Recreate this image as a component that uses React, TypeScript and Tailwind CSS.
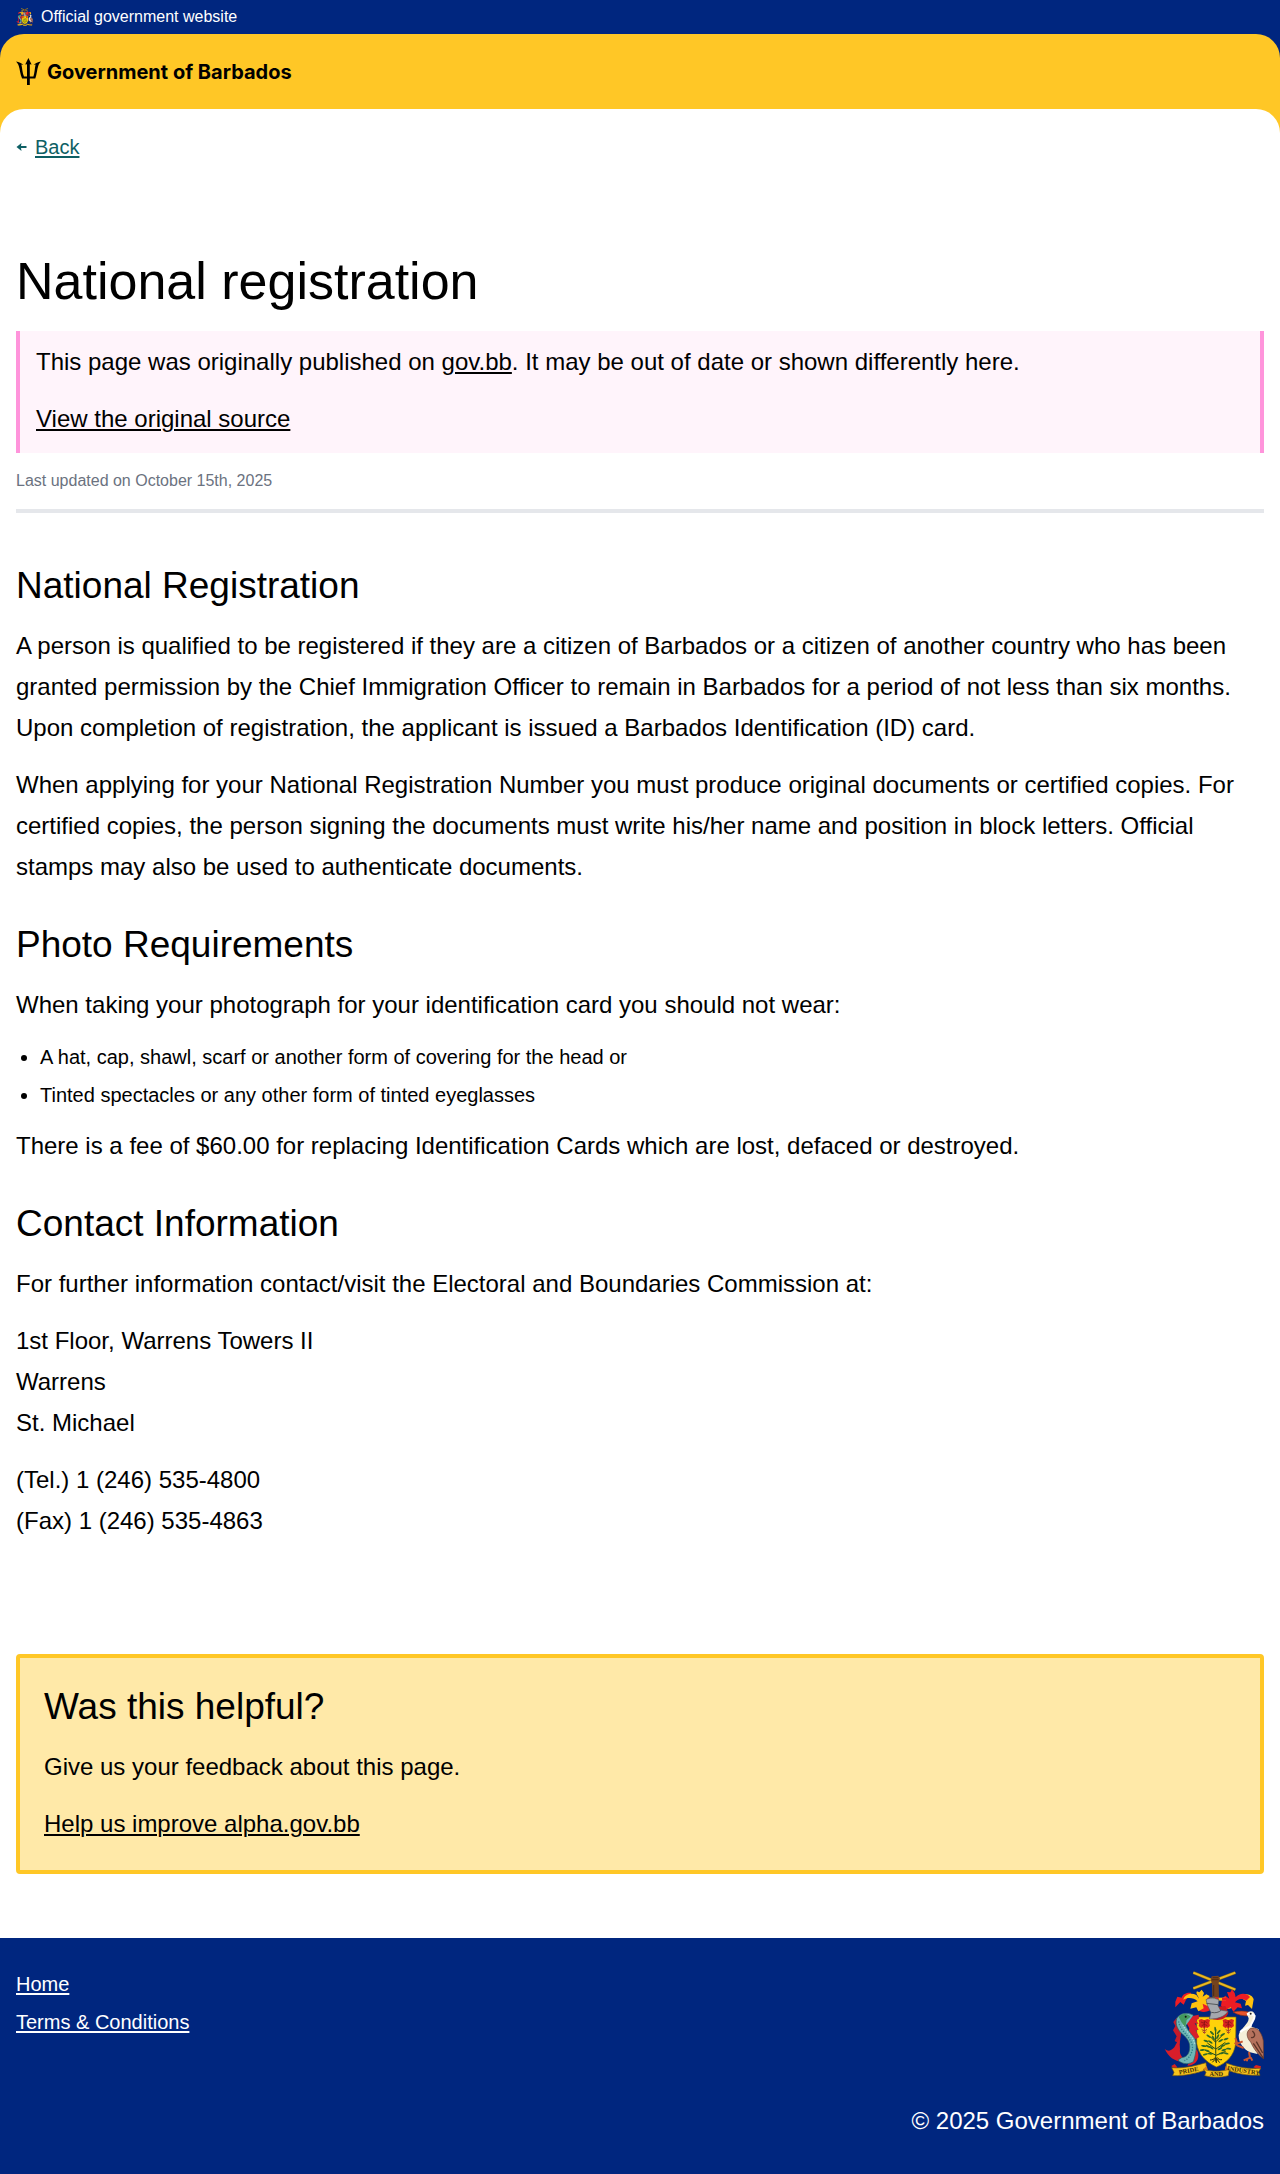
import type { ReactNode } from 'react';

const LINK = 'underline decoration-2 underline-offset-2';

function Trident() {
  return (
    <svg viewBox="0 0 25 27" className="h-[27px] w-[25px] shrink-0" fill="currentColor" aria-hidden="true">
      <path d="M12.4 0 15.6 6.6 13.8 6.2V18.4H17.4C18.6 15 18.7 10.4 19.6 6.4L17.6 6.8C19.4 5 22 4 25 3.4 23.7 4.6 22.9 6 22.3 7.8 21 11.6 20.9 16.6 19.3 20.4H13.8V27H11V20.4H6.1C4.1 16.6 4 11.6 2.7 7.8 2.1 6 1.3 4.6 0 3.4 3 4 5.6 5 7.4 6.8L5.4 6.4C6.3 10.4 6.4 15 8 18.4H11V6.2L9.2 6.6Z" />
    </svg>
  );
}

function Leaf({ x, y, r }: { x: number; y: number; r: number }) {
  return <ellipse cx={x} cy={y} rx="8" ry="2.8" fill="#2f6a26" transform={`rotate(${r} ${x} ${y})`} />;
}

const LEAVES: [number, number, number][] = [
  [196, 208, 80], [206, 216, -50], [186, 219, 45], [218, 224, -30], [176, 229, 35],
  [203, 230, -60], [190, 234, 60], [228, 237, -20], [168, 243, 20], [212, 242, -30],
  [181, 246, 35], [232, 251, -10], [161, 258, 10], [219, 257, -25], [174, 259, 25],
  [236, 266, 5], [157, 270, -5], [222, 270, -15], [171, 272, 12], [228, 280, 15],
  [166, 283, -15], [210, 266, -30], [184, 263, 35], [214, 280, -5], [180, 281, 5],
];

function Flower({ x }: { x: number }) {
  return (
    <g>
      <path d={`M${x - 17} 180l8-3 9 4 9-4 8 3-2 9 2 9-8 6-5-2-4 5-4-5-5 2-8-6 2-9z`} fill="#d8241f" />
      <path d={`M${x - 10} 186l7 3 7-4 6 5M${x - 8} 197l8-4 9 4M${x} 181v22`} stroke="#7d0f12" strokeWidth="2" fill="none" />
      <path d={`M${x - 8} 208c4 5 12 5 16 0M${x} 204v15M${x - 5} 215l5 5 5-5`} stroke="#a6402c" strokeWidth="3" fill="none" />
    </g>
  );
}

function CoatOfArms({ className, motto = false }: { className: string; motto?: boolean }) {
  return (
    <svg viewBox="42 30 300 324" className={className} role="img" aria-label="Coat of arms of Barbados">
      {/* crossed sugar canes and raised arm */}
      <path d="M130 38 256 89" stroke="#8a6d10" strokeWidth="9" />
      <path d="M130 38 256 89" stroke="#e9b824" strokeWidth="6" />
      <path d="M130 85 256 38" stroke="#8a6d10" strokeWidth="9" />
      <path d="M130 85 256 38" stroke="#e9b824" strokeWidth="6" />
      <path d="M187 112 186 70 182 60 185 49 205 47 210 56 206 69 207 112Z" fill="#74431f" />
      <path d="M188 53h17M186 59h20M191 75v33" stroke="#3d210f" strokeWidth="2" />

      {/* mantling */}
      <path d="M180 150C164 160 150 156 142 147 147 143 142 137 137 132L150 118 178 124Z" fill="#ed1c24" />
      <path d="M218 148c14 0 26-2 34-8 6-6 2-13-4-17l-22-10-10 20z" fill="#f4c410" />
      <path d="M76 142 76 125 82 110 95 113C99 101 113 97 124 99L108 119 101 134 91 126Z" fill="#ed1c24" />
      <path d="M100 119C103 104 122 96 139 105 142 108 144 112 147 116 144 106 136 101 141 94L148 97 155 89 162 99 158 110 169 103 179 108 170 120 180 126 174 139 158 131 161 145 145 154 139 142 121 146 125 130 143 124C131 113 114 111 100 119Z" fill="#ffc20e" />
      <path d="M311 118 306 147 294 135 285 137 288 123 270 112 283 102C299 103 307 107 311 118Z" fill="#ffc20e" />
      <path d="M216 116 226 107 238 116 231 96 241 97 246 88 254 99 257 112C267 99 289 97 300 111L289 122C275 113 263 116 255 127L272 131 276 145 263 142 250 155 242 141 227 151 213 137Z" fill="#ed1c24" />

      {/* helmet */}
      <path d="M166 113h62v9h-62z" fill="#ffc20e" />
      <path d="M172 113h11v9h-11zM195 112h11v10h-11zM216 113h12v9h-12z" fill="#ed1c24" />

      {/* shield */}
      <path d="M140 171H258L257 251C252 287 230 309 199 321 168 307 145 284 140 250Z" fill="#ffd20a" stroke="#7a6512" strokeWidth="2" />
      <path d="M178 174C205 186 229 178 235 158L226 138 204 140Z" fill="#cc1a20" />
      <path d="M168 119C180 112 195 113 207 120L204 137 211 150 234 154C225 170 201 178 178 177L183 158 173 137Z" fill="#a5a8ad" stroke="#55585c" strokeWidth="2" />
      <path d="M169 130 204 134M184 157C196 160 207 157 213 151" stroke="#55585c" strokeWidth="3" fill="none" />
      <Flower x={163} />
      <Flower x={235} />
      <path d="M197 305C198 270 196 240 197 207M197 285 165 270M198 286 227 274M197 267 172 249M198 267 226 247M197 247 181 230M198 245 217 226" stroke="#27491c" strokeWidth="3" fill="none" />
      {LEAVES.map(([x, y, r]) => (
        <Leaf key={`${x}-${y}`} x={x} y={y} r={r} />
      ))}
      <path d="M196 292C194 298 185 300 180 300M201 292C204 298 211 300 216 299M198 295 187 307M199 295 209 308M199 296V309" stroke="#27290f" strokeWidth="3" fill="none" />

      {/* dolphin */}
      <path d="M128 168 146 164 147 176 138 181 146 192 134 190 146 209 137 211 148 231 126 244 112 238 118 205 110 190Z" fill="#d81e2a" />
      <path d="M82 171 70 186 76 198 69 211 80 229 74 243 89 252 94 214Z" fill="#c51b2b" />
      <path d="M97 305C74 304 54 290 44 266 56 277 65 271 73 262 78 251 85 240 88 236L90 268C88 283 95 290 103 297Z" fill="#d81e2a" />
      <path d="M112 317C130 316 146 306 145 284 145 273 139 267 134 264L130 282Z" fill="#d81e2a" />
      <path d="M130 166C112 155 88 160 80 176 75 194 84 211 97 222 111 233 121 247 119 265 118 281 110 292 95 293L84 300C92 309 110 317 130 305 137 284 143 258 134 235 120 218 109 205 108 196 114 187L132 181Z" fill="#6fb5b6" stroke="#2c5f60" strokeWidth="2" />
      <path d="M86 184C88 212 118 224 127 256 130 275 119 295 103 302" stroke="#2f8288" strokeWidth="4" strokeDasharray="4 4" fill="none" />
      <path d="M98 186C98 211 129 224 134 252" stroke="#a8dcda" strokeWidth="4" strokeDasharray="4 4" fill="none" />
      <path d="M86 171C95 158 113 160 122 170L110 180 106 202 96 189Z" fill="#43995d" />
      <circle cx="107" cy="170" r="3" fill="#111" />

      {/* pelican */}
      <path d="M249 156C265 152 285 152 298 157L296 168C279 168 263 165 249 156Z" fill="#e8542b" stroke="#7e2a16" strokeWidth="2" />
      <path d="M290 161C298 149 315 152 315 167 315 178 303 189 304 200L325 207 334 232 322 282 300 277C281 268 266 249 266 226 268 208 296 194 296 175Z" fill="#f5efd8" />
      <path d="M291 163C298 161 309 162 314 168 314 179 304 188 302 198 292 206 277 207 271 217" fill="none" stroke="#fff" strokeWidth="6" />
      <circle cx="302" cy="161" r="3" fill="#222" />
      <path d="M302 205C321 200 334 214 340 242L341 296C326 286 311 267 302 246 290 234 286 215 302 205Z" fill="#b5725d" stroke="#6b3d2e" strokeWidth="2" />
      <path d="M307 213C320 225 312 235 303 232M310 250 341 296M319 245 338 279" stroke="#5d3529" strokeWidth="4" fill="none" />
      <path d="M256 234 262 251 278 244M254 248 263 257 281 264M297 276 300 293 281 301M302 292 307 302M291 297V304" stroke="#c9542f" strokeWidth="6" fill="none" />

      {/* motto scroll */}
      <path d="M64 318 74 312 82 322 76 332Z" fill="#d8241f" />
      <path d="M310 322 318 315 333 319 330 330Z" fill="#d8241f" />
      <path d="M65 323C98 326 133 318 168 308L170 329C137 340 107 348 68 347L72 337Z" fill="#f6c21c" stroke="#6e5310" strokeWidth="2" />
      <path d="M229 309C263 322 295 327 332 325L326 336 330 346C291 347 260 341 228 329Z" fill="#f6c21c" stroke="#6e5310" strokeWidth="2" />
      <path d="M160 328C185 335 213 335 238 328L235 347C211 353 188 353 164 347L168 337Z" fill="#f6c21c" stroke="#6e5310" strokeWidth="2" />
      <path d="M159 328 170 318 174 331ZM237 327 227 318 224 331Z" fill="#d97a1b" />
      {motto && (
        <g fill="#3a2d08" fontFamily="Liberation Serif, serif" fontWeight="700" fontSize="19" textAnchor="middle">
          <text x="117" y="338" transform="rotate(-11 117 338)">PRIDE</text>
          <text x="199" y="348">AND</text>
          <text x="280" y="338" transform="rotate(9 280 338)">INDUSTRY</text>
        </g>
      )}
    </svg>
  );
}

function SectionHeading({ children }: { children: ReactNode }) {
  return <h2 className="mb-3.5 text-[37px] leading-[50px]">{children}</h2>;
}

export default function App() {
  return (
    <div className="bg-white font-['Liberation_Sans',Arial,sans-serif] text-2xl leading-[41px] text-black">
      <div className="bg-[#00267f]">
        <div className="flex h-[34px] items-center gap-2 px-4 text-base text-white">
          <CoatOfArms className="h-[18px] w-[17px] shrink-0" />
          <span>Official government website</span>
        </div>
        <header className="rounded-t-3xl bg-[#ffc726]">
          <a
            href="#home"
            className="flex h-[75px] items-center gap-1.5 px-4 font-['Inter',sans-serif] text-xl font-bold text-black"
          >
            <Trident />
            <span>Government of Barbados</span>
          </a>
          <div className="h-6 rounded-t-3xl bg-white" />
        </header>
      </div>

      <nav aria-label="Breadcrumb" className="flex items-center gap-2 px-4 text-xl leading-7 text-[#0e5f64]">
        <svg viewBox="0 0 10 8" className="h-2 w-[11px]" fill="currentColor" aria-hidden="true">
          <path d="M0 4 5 0 4.5 3H10V5H4.5L5 8Z" />
        </svg>
        <a href="#back" className={LINK}>Back</a>
      </nav>

      <main className="px-4 pt-[88px] pb-16">
        <h1 className="mb-[18px] text-[52px] leading-[64px]">National registration</h1>

        <aside className="border-x-4 border-[#ff94db] bg-[#fff4fb] px-4 pt-2.5 pb-3.5">
          <p className="mb-4">
            This page was originally published on <a href="#gov" className={LINK}>gov.bb</a>. It may be out of date or
            shown differently here.
          </p>
          <p>
            <a href="#source" className={LINK}>View the original source</a>
          </p>
        </aside>

        <p className="border-b-4 border-[#e5e7eb] pt-3.5 pb-3.5 text-base leading-7 text-[#6b7280]">
          Last updated on October 15th, 2025
        </p>

        <article className="pt-12">
          <section>
            <SectionHeading>National Registration</SectionHeading>
            <p className="mb-4">
              A person is qualified to be registered if they are a citizen of Barbados or a citizen of another country
              who has been granted permission by the Chief Immigration Officer to remain in Barbados for a period of
              not less than six months. Upon completion of registration, the applicant is issued a Barbados
              Identification (ID) card.
            </p>
            <p>
              When applying for your National Registration Number you must produce original documents or certified
              copies. For certified copies, the person signing the documents must write his/her name and position in
              block letters. Official stamps may also be used to authenticate documents.
            </p>
          </section>

          <section className="pt-[33px]">
            <SectionHeading>Photo Requirements</SectionHeading>
            <p className="mb-[15px]">When taking your photograph for your identification card you should not wear:</p>
            <ul className="mb-[13px] flex list-disc flex-col gap-1 pl-6 text-xl leading-[34px]">
              <li>A hat, cap, shawl, scarf or another form of covering for the head or</li>
              <li>Tinted spectacles or any other form of tinted eyeglasses</li>
            </ul>
            <p>There is a fee of $60.00 for replacing Identification Cards which are lost, defaced or destroyed.</p>
          </section>

          <section className="pt-[33px]">
            <SectionHeading>Contact Information</SectionHeading>
            <p className="mb-4">For further information contact/visit the Electoral and Boundaries Commission at:</p>
            <address className="not-italic">
              <p className="mb-4">
                1st Floor, Warrens Towers II
                <br />
                Warrens
                <br />
                St. Michael
              </p>
              <p>
                (Tel.) 1 (246) 535-4800
                <br />
                (Fax) 1 (246) 535-4863
              </p>
            </address>
          </section>
        </article>

        <section className="mt-[113px] rounded border-4 border-[#ffc726] bg-[#ffe9a8] px-6 pt-6 pb-[26px]">
          <SectionHeading>Was this helpful?</SectionHeading>
          <p className="mb-4">Give us your feedback about this page.</p>
          <p>
            <a href="#feedback" className={LINK}>Help us improve alpha.gov.bb</a>
          </p>
        </section>
      </main>

      <footer className="bg-[#00267f] px-4 py-8 text-white">
        <div className="flex items-start justify-between">
          <nav aria-label="Footer" className="flex flex-col items-start gap-2.5 text-xl leading-7">
            <a href="#home" className={LINK}>Home</a>
            <a href="#terms" className={LINK}>Terms &amp; Conditions</a>
          </nav>
          <CoatOfArms className="h-[108px] w-[100px]" motto />
        </div>
        <p className="mt-[22px] pb-px text-right">© 2025 Government of Barbados</p>
      </footer>
    </div>
  );
}
